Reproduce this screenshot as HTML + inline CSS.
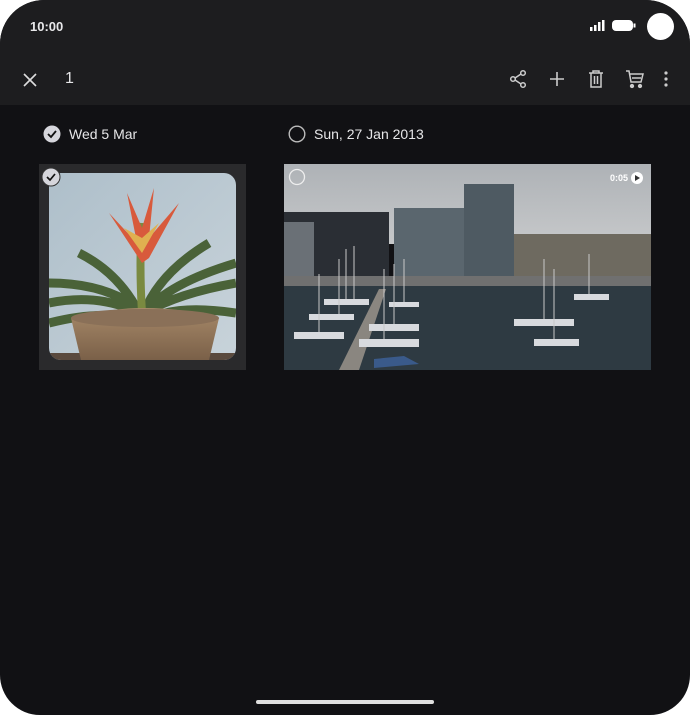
<!DOCTYPE html>
<html><head><style>
*{margin:0;padding:0;box-sizing:border-box}
html,body{width:690px;height:715px;background:#fff;overflow:hidden}
.scr{position:absolute;left:0;top:0;width:690px;height:715px;background:#111114;border-radius:44px 44px 40px 40px;overflow:hidden;font-family:"Liberation Sans",sans-serif;color:#e8e8ea}
.top{position:absolute;left:0;top:0;width:690px;height:105px;background:#1d1d1f}
.t{position:absolute;font-size:13px;font-weight:bold;left:30px;top:19px}
.cam{position:absolute;left:647px;top:13px;width:27px;height:27px;border-radius:50%;background:#fff}
.lbl{position:absolute;font-size:14px;color:#e6e6e8}
.home{position:absolute;left:256px;top:700px;width:178px;height:4px;border-radius:2px;background:#e0e0e0}
</style></head><body>
<div class="scr">
<div class="top"></div>
<div class="t">10:00</div>
<svg style="position:absolute;left:588px;top:18px" width="50" height="16">
<rect x="2" y="9" width="2.5" height="4" fill="#fff"/><rect x="6" y="7" width="2.5" height="6" fill="#fff"/><rect x="10" y="4" width="2.5" height="9" fill="#fff"/><rect x="14" y="2" width="2.5" height="11" fill="#fff"/>
<rect x="24" y="2" width="21" height="11" rx="4" fill="#fff"/><rect x="45.5" y="5.5" width="2" height="4" fill="#fff"/></svg>
<div class="cam"></div>
<svg style="position:absolute;left:22px;top:72px" width="16" height="16"><path d="M2 2L14 14M14 2L2 14" stroke="#ddd" stroke-width="1.6"/></svg>
<div class="lbl" style="left:65px;top:70px;font-size:16px">1</div>
<svg style="position:absolute;left:508px;top:69px" width="20" height="20" fill="none" stroke="#ccc" stroke-width="1.5"><circle cx="15" cy="4" r="2.3"/><circle cx="5" cy="10" r="2.3"/><circle cx="15" cy="16" r="2.3"/><path d="M7 9L13 5M7 11L13 15"/></svg>
<svg style="position:absolute;left:548px;top:70px" width="18" height="18" stroke="#ccc" stroke-width="1.6"><path d="M9 2V16M2 9H16"/></svg>
<svg style="position:absolute;left:587px;top:69px" width="18" height="20" fill="none" stroke="#ccc" stroke-width="1.5"><path d="M2 4H16M6 4V2H12V4M4 4V18H14V4M7.5 7V15M10.5 7V15"/></svg>
<svg style="position:absolute;left:624px;top:68px" width="22" height="22" fill="none" stroke="#ccc" stroke-width="1.5"><path d="M2 3H5L7 14H17L19 6H6M8 10H17"/><circle cx="8" cy="18" r="1.4" fill="#ccc"/><circle cx="16" cy="18" r="1.4" fill="#ccc"/></svg>
<svg style="position:absolute;left:662px;top:70px" width="8" height="18" fill="#ccc"><circle cx="4" cy="3" r="1.6"/><circle cx="4" cy="9" r="1.6"/><circle cx="4" cy="15" r="1.6"/></svg>

<svg style="position:absolute;left:43px;top:125px" width="18" height="18"><circle cx="9" cy="9" r="8.5" fill="#d6d6dc"/><path d="M5 9L8 12L13 6" stroke="#111" stroke-width="1.8" fill="none"/></svg>
<div class="lbl" style="left:69px;top:126px">Wed 5 Mar</div>
<svg style="position:absolute;left:288px;top:125px" width="18" height="18"><circle cx="9" cy="9" r="7.8" fill="none" stroke="#bbb" stroke-width="1.4"/></svg>
<div class="lbl" style="left:314px;top:126px">Sun, 27 Jan 2013</div>

<div style="position:absolute;left:39px;top:164px;width:207px;height:206px;background:#2a2a2c"></div>
<svg style="position:absolute;left:49px;top:173px" width="187" height="187">
<defs><clipPath id="c"><rect width="187" height="187" rx="12"/></clipPath>
<linearGradient id="bg" x1="0" y1="0" x2="1" y2="1"><stop offset="0" stop-color="#aebfca"/><stop offset="1" stop-color="#c8d3da"/></linearGradient>
<linearGradient id="pot" x1="0" y1="0" x2="0" y2="1"><stop offset="0" stop-color="#a88a6a"/><stop offset="1" stop-color="#7a6048"/></linearGradient></defs>
<g clip-path="url(#c)">
<rect width="187" height="187" fill="url(#bg)"/>
<rect y="180" width="187" height="7" fill="#5a4a3e"/>
<path d="M0 130Q50 120 90 140M0 110Q60 110 95 140M187 110Q130 120 95 140M187 90Q120 110 95 140M30 80Q70 100 90 140M160 70Q110 100 95 140M0 150Q60 135 90 150M187 140Q120 130 95 150" stroke="#4a6238" stroke-width="9" fill="none"/>
<path d="M93 140Q90 90 93 50" stroke="#7a8a40" stroke-width="8" fill="none"/>
<path d="M93 90L60 40L88 70L78 20L93 55L105 15L100 65L130 30L100 85Z" fill="#d85a3c"/>
<path d="M93 80L75 55L93 65L110 50Z" fill="#e0b050"/>
<path d="M22 145Q95 125 170 145L160 187H32Z" fill="url(#pot)"/>
<ellipse cx="96" cy="145" rx="74" ry="9" fill="#8a7058"/>
</g></svg>
<svg style="position:absolute;left:41px;top:167px" width="20" height="20"><circle cx="10" cy="10" r="9" fill="#d6d6dc" stroke="#333" stroke-width="1"/><path d="M6 10L9 13L14 7" stroke="#111" stroke-width="1.7" fill="none"/></svg>

<svg style="position:absolute;left:284px;top:164px" width="367" height="206">
<defs><linearGradient id="sky" x1="0" y1="0" x2="0" y2="1"><stop offset="0" stop-color="#aeb2b6"/><stop offset="1" stop-color="#c6c8ca"/></linearGradient></defs>
<rect width="367" height="80" fill="url(#sky)"/>
<rect x="0" y="48" width="105" height="65" fill="#2a2e34"/>
<rect x="0" y="58" width="30" height="55" fill="#6a7076"/>
<rect x="110" y="44" width="74" height="70" fill="#5a666e"/>
<rect x="180" y="20" width="50" height="95" fill="#4e5a62"/>
<rect x="230" y="70" width="137" height="45" fill="#6e6a60"/>
<rect x="0" y="112" width="367" height="10" fill="#707070"/>
<rect x="0" y="122" width="367" height="84" fill="#2e3a42"/>
<path d="M55 206L95 125L102 125L75 206Z" fill="#8a8680"/>
<g fill="#d8dade"><rect x="10" y="168" width="50" height="7"/><rect x="25" y="150" width="45" height="6"/><rect x="40" y="135" width="45" height="6"/><rect x="75" y="175" width="60" height="8"/><rect x="85" y="160" width="50" height="7"/><rect x="230" y="155" width="60" height="7"/><rect x="250" y="175" width="45" height="7"/><rect x="290" y="130" width="35" height="6"/><rect x="105" y="138" width="30" height="5"/></g>
<path d="M90 195L120 192L135 200L90 204Z" fill="#3a5a8a"/>
<g stroke="#c8c8c8" stroke-width="1"><path d="M35 168V110M55 150V95M62 135V85M70 135V82M100 175V105M110 160V100M120 138V95M260 155V95M270 175V105M305 130V90"/></g>
<text x="326" y="17" font-size="9" font-weight="bold" fill="#fff" font-family="Liberation Sans">0:05</text>
<circle cx="353" cy="14" r="6" fill="#fff"/><path d="M351 11L356 14L351 17Z" fill="#333"/>
<circle cx="13" cy="13" r="7.5" fill="none" stroke="#eee" stroke-width="1.3"/>
</svg>
<div class="home"></div>
</div>
</body></html>
